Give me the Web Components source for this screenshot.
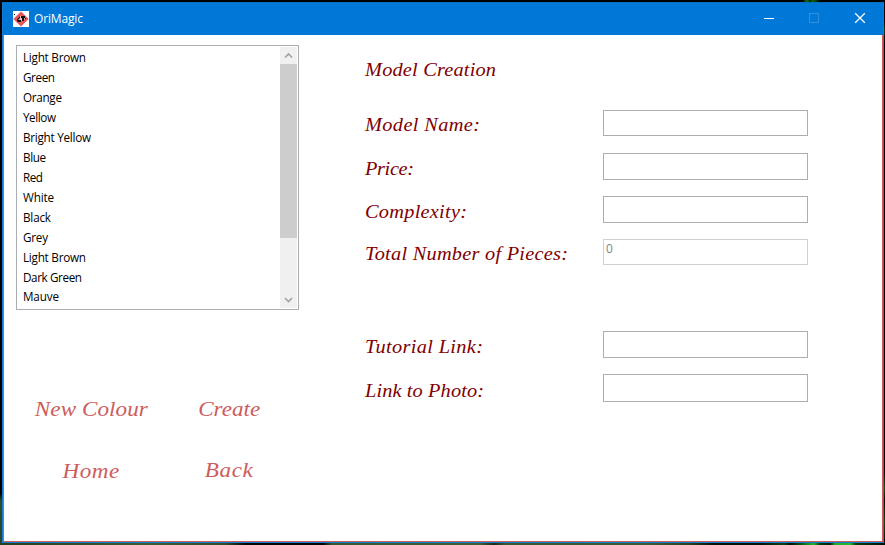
<!DOCTYPE html>
<html lang="en">
<head>
<meta charset="utf-8">
<title>OriMagic</title>
<style>
html,body{margin:0;height:100%;overflow:hidden}
body{background:#000;font-family:"Open Sans","Noto Sans",sans-serif}
</style>
</head>
<body>
<desktop-backdrop>
<app-window>
  <title-bar slot="title"><fit-text w="49">OriMagic</fit-text></title-bar>
  <side-panel>
    <colour-list>
      <list-row w="63">Light Brown</list-row>
      <list-row w="32">Green</list-row>
      <list-row w="39">Orange</list-row>
      <list-row w="33">Yellow</list-row>
      <list-row w="68">Bright Yellow</list-row>
      <list-row w="23">Blue</list-row>
      <list-row w="20">Red</list-row>
      <list-row w="31">White</list-row>
      <list-row w="28">Black</list-row>
      <list-row w="25">Grey</list-row>
      <list-row w="63">Light Brown</list-row>
      <list-row w="59">Dark Green</list-row>
      <list-row w="36" style="margin-top:-1px">Mauve</list-row>
    </colour-list>
    <action-grid>
      <link-button w="113">New Colour</link-button>
      <link-button w="62">Create</link-button>
      <link-button w="57" style="padding-top:1px">Home</link-button>
      <link-button w="48">Back</link-button>
    </action-grid>
  </side-panel>
  <model-form>
    <script-label w="131" slot="heading">Model Creation</script-label>
    <form-field label="Model Name:" w="115" h="26" gap="17" shift="1"></form-field>
    <form-field label="Price:" w="49" h="27" gap="16" shift="2"></form-field>
    <form-field label="Complexity:" w="102" h="27" gap="16" shift="2"></form-field>
    <form-field label="Total Number of Pieces:" w="203" h="26" gap="66" shift="1" value="0" disabled></form-field>
    <form-field label="Tutorial Link:" w="118" h="27" gap="16" shift="2"></form-field>
    <form-field label="Link to Photo:" w="119" h="28" gap="0" shift="3"></form-field>
  </model-form>
</app-window>
</desktop-backdrop>

<script>
const make = (host, html) => { host.attachShadow({mode:'open'}).innerHTML = html; };

// Adjusts tracking so a run of text takes up a given width, after an optional horizontal stretch.
function track(el, text, width, stretch = 1) {
  if (!width) return;
  const now = el.getBoundingClientRect().width;
  el.style.letterSpacing = ((width / stretch - now) / (text.length - 1)) + 'px';
  if (stretch !== 1) el.style.transform = `scaleX(${stretch})`;
}
function define(name, render, after) {
  customElements.define(name, class extends HTMLElement {
    connectedCallback() {
      if (this.shadowRoot) return;
      make(this, render(this));
      if (after) after(this);
    }
  });
}
const fitWith = stretch => el => track(el.shadowRoot.querySelector('span'), el.textContent.trim(), +el.getAttribute('w'), stretch);
const fitSlot = fitWith(1), fitScript = fitWith(1.1);

define('desktop-backdrop', () => `<style>
:host{display:block;box-sizing:border-box;width:885px;height:545px;padding:2px 1px 2px 2px;
background:
linear-gradient(90deg,transparent 595px,#041b05 640px,#041b05 642px,#0b650d 647px,#052008 700px,transparent 760px) 0 0/0 0 no-repeat,
linear-gradient(90deg,transparent 803px,#0b650d 806px 808px,#052008 810px,#0a5a10 812px 814px,transparent 820px) 0 0/100% 2px no-repeat,
linear-gradient(90deg,#253f20 0,#304f29 80px,#3c5c32 150px,#304d29 225px,#050505 246px,#050505 323px,#38582f 332px,#3e6035 480px,#1b2b18 494px,#38582f 505px,#3b5c32 650px,#29411f 690px,#071006 714px,#061207 760px,#0a4311 784px,#041006 790px,#08500d 800px,#20b72b 814px,#063b0b 820px,#052307 830px,#22ab2d 835px,#24bb30 850px,#063f0c 856px,#031205 885px) 0 543px/100% 2px no-repeat,
linear-gradient(#000 0 493px,#2d4d28 501px,#29452a 100%) 0 0/2px 100% no-repeat,
linear-gradient(#000 0 22px,#073e0a 30px,#010401 45px,#000 470px,#0b5a12 488px,#021003 500px,#0b4a12 522px,#020902 100%) 884px 0/1px 100% no-repeat,#000}
</style><slot></slot>`);

define('app-window', () => `<style>
:host{display:flex;flex-direction:column;box-sizing:border-box;width:882px;height:541px;border:1px solid #167bd3;border-top-color:#0b6dc0}
main{display:flex;flex:1;box-sizing:border-box;background:#fff;border:1px solid #cf5c5c;border-top:0}
</style><slot name="title"></slot><main><slot></slot></main>`);

define('fit-text', () => `<style>:host{display:inline-block;white-space:nowrap;font-size:12px;line-height:18px}span{display:inline-block}</style><span><slot></slot></span>`, fitSlot);

define('title-bar', () => `<style>
:host{display:flex;align-items:center;height:32px;background:#0078d7;color:#fff;font-size:12px;line-height:18px}
.logo{width:16px;height:16px;margin:-1px 5px 0 10px;flex:none}
nav{display:flex;margin-left:auto}
nav svg{width:46px;height:32px;display:block}
nav svg:last-child{width:45px}
</style>
<svg class="logo" viewBox="0 0 16 16"><rect width="16" height="16" fill="#fff"/><path d="M8 .5 15.7 8 8 15.5.3 8Z" fill="#e9545c"/><path d="M4.2 7.5 7 5h3l2 2.5L10.3 10H6Z" fill="#f5b9ba"/><path d="M1 3h1v1H1zM4 8l3-3v2L5 9h3v2H5L4 10ZM8 5h4v2h-1v3H9V7H8ZM12 7h1v1h-1z" fill="#111"/></svg>
<slot></slot>
<nav>
<svg viewBox="0 0 46 32"><path d="M18 15.5h10" stroke="#fff"/></svg>
<svg viewBox="0 0 46 32"><rect x="17.5" y="10.5" width="9" height="9" fill="none" stroke="#318fdb"/></svg>
<svg viewBox="0 0 45 32"><path d="m17.2 10.2 9.6 9.6m0-9.6-9.6 9.6" stroke="#fff" stroke-width="1.3"/></svg>
</nav>`);

define('side-panel', () => `<style>
:host{display:flex;flex-direction:column;width:283px;margin:10px 0 0 12px;flex:none}
</style><slot></slot>`);

define('colour-list', () => `<style>
:host{display:flex;box-sizing:border-box;width:283px;height:265px;border:1px solid #abadb3;padding:1px;background:#fff}
.rows{flex:1;padding:0 0 0 5px;overflow:hidden}
.bar{width:17px;display:flex;flex-direction:column;background:#f0f0f0}
.bar svg{width:17px;height:17px;flex:none}
.thumb{height:174px;background:#cdcdcd}
.rest{flex:1}
path{fill:none;stroke:#a2a2a2;stroke-width:1.7}
</style><div class="rows"><slot></slot></div>
<div class="bar"><svg viewBox="0 0 17 17"><path d="m5 10.5 3.5-3.5 3.5 3.5"/></svg><div class="thumb"></div><div class="rest"></div><svg viewBox="0 0 17 17"><path d="m5 7 3.5 3.5 3.5-3.5"/></svg></div>`);

define('list-row', () => `<style>
:host{display:block;height:20px;font-size:11.7px;line-height:20px;color:#000;white-space:nowrap}
span{display:inline-block}
</style><span><slot></slot></span>`, fitSlot);

define('action-grid', () => `<style>
:host{display:grid;grid-template-columns:150px 127px;grid-template-rows:61px 61px;margin-top:82px}
</style><slot></slot>`);

define('link-button', () => `<style>
:host{display:block;text-align:center;font:italic 21px/34px "Lucida Calligraphy","Liberation Serif",serif;color:#cd5c5c;white-space:nowrap}
span{display:inline-block}
</style><span><slot></slot></span>`, fitScript);

define('script-label', () => `<style>
:host{display:block;font:italic 18.5px/28px "Lucida Calligraphy","Liberation Serif",serif;color:#800000;white-space:nowrap}
span{display:inline-block;transform-origin:0 50%}
</style><span><slot></slot></span>`, fitScript);

define('model-form', () => `<style>
:host{display:block;margin:21px 0 0 66px;width:443px}
header{height:54px}
</style><header><slot name="heading"></slot></header><slot></slot>`);

define('form-field', el => `<style>
:host{display:grid;grid-template-columns:238px 205px;grid-template-rows:${el.getAttribute('h')}px;height:${el.getAttribute('h')}px;margin-bottom:${el.getAttribute('gap')}px}
script-label{margin-top:${el.getAttribute('shift')}px}
.box{box-sizing:border-box;height:100%;border:1px solid #abadb3;padding-left:2px;background:#fff;font-size:12px;line-height:18px;color:#838383}
:host([disabled]) .box{border-color:#d0d1d4}
</style><script-label w="${el.getAttribute('w')}">${el.getAttribute('label')}</script-label><div class="box">${el.getAttribute('value') || ''}</div>`);
</script>
</body>
</html>
